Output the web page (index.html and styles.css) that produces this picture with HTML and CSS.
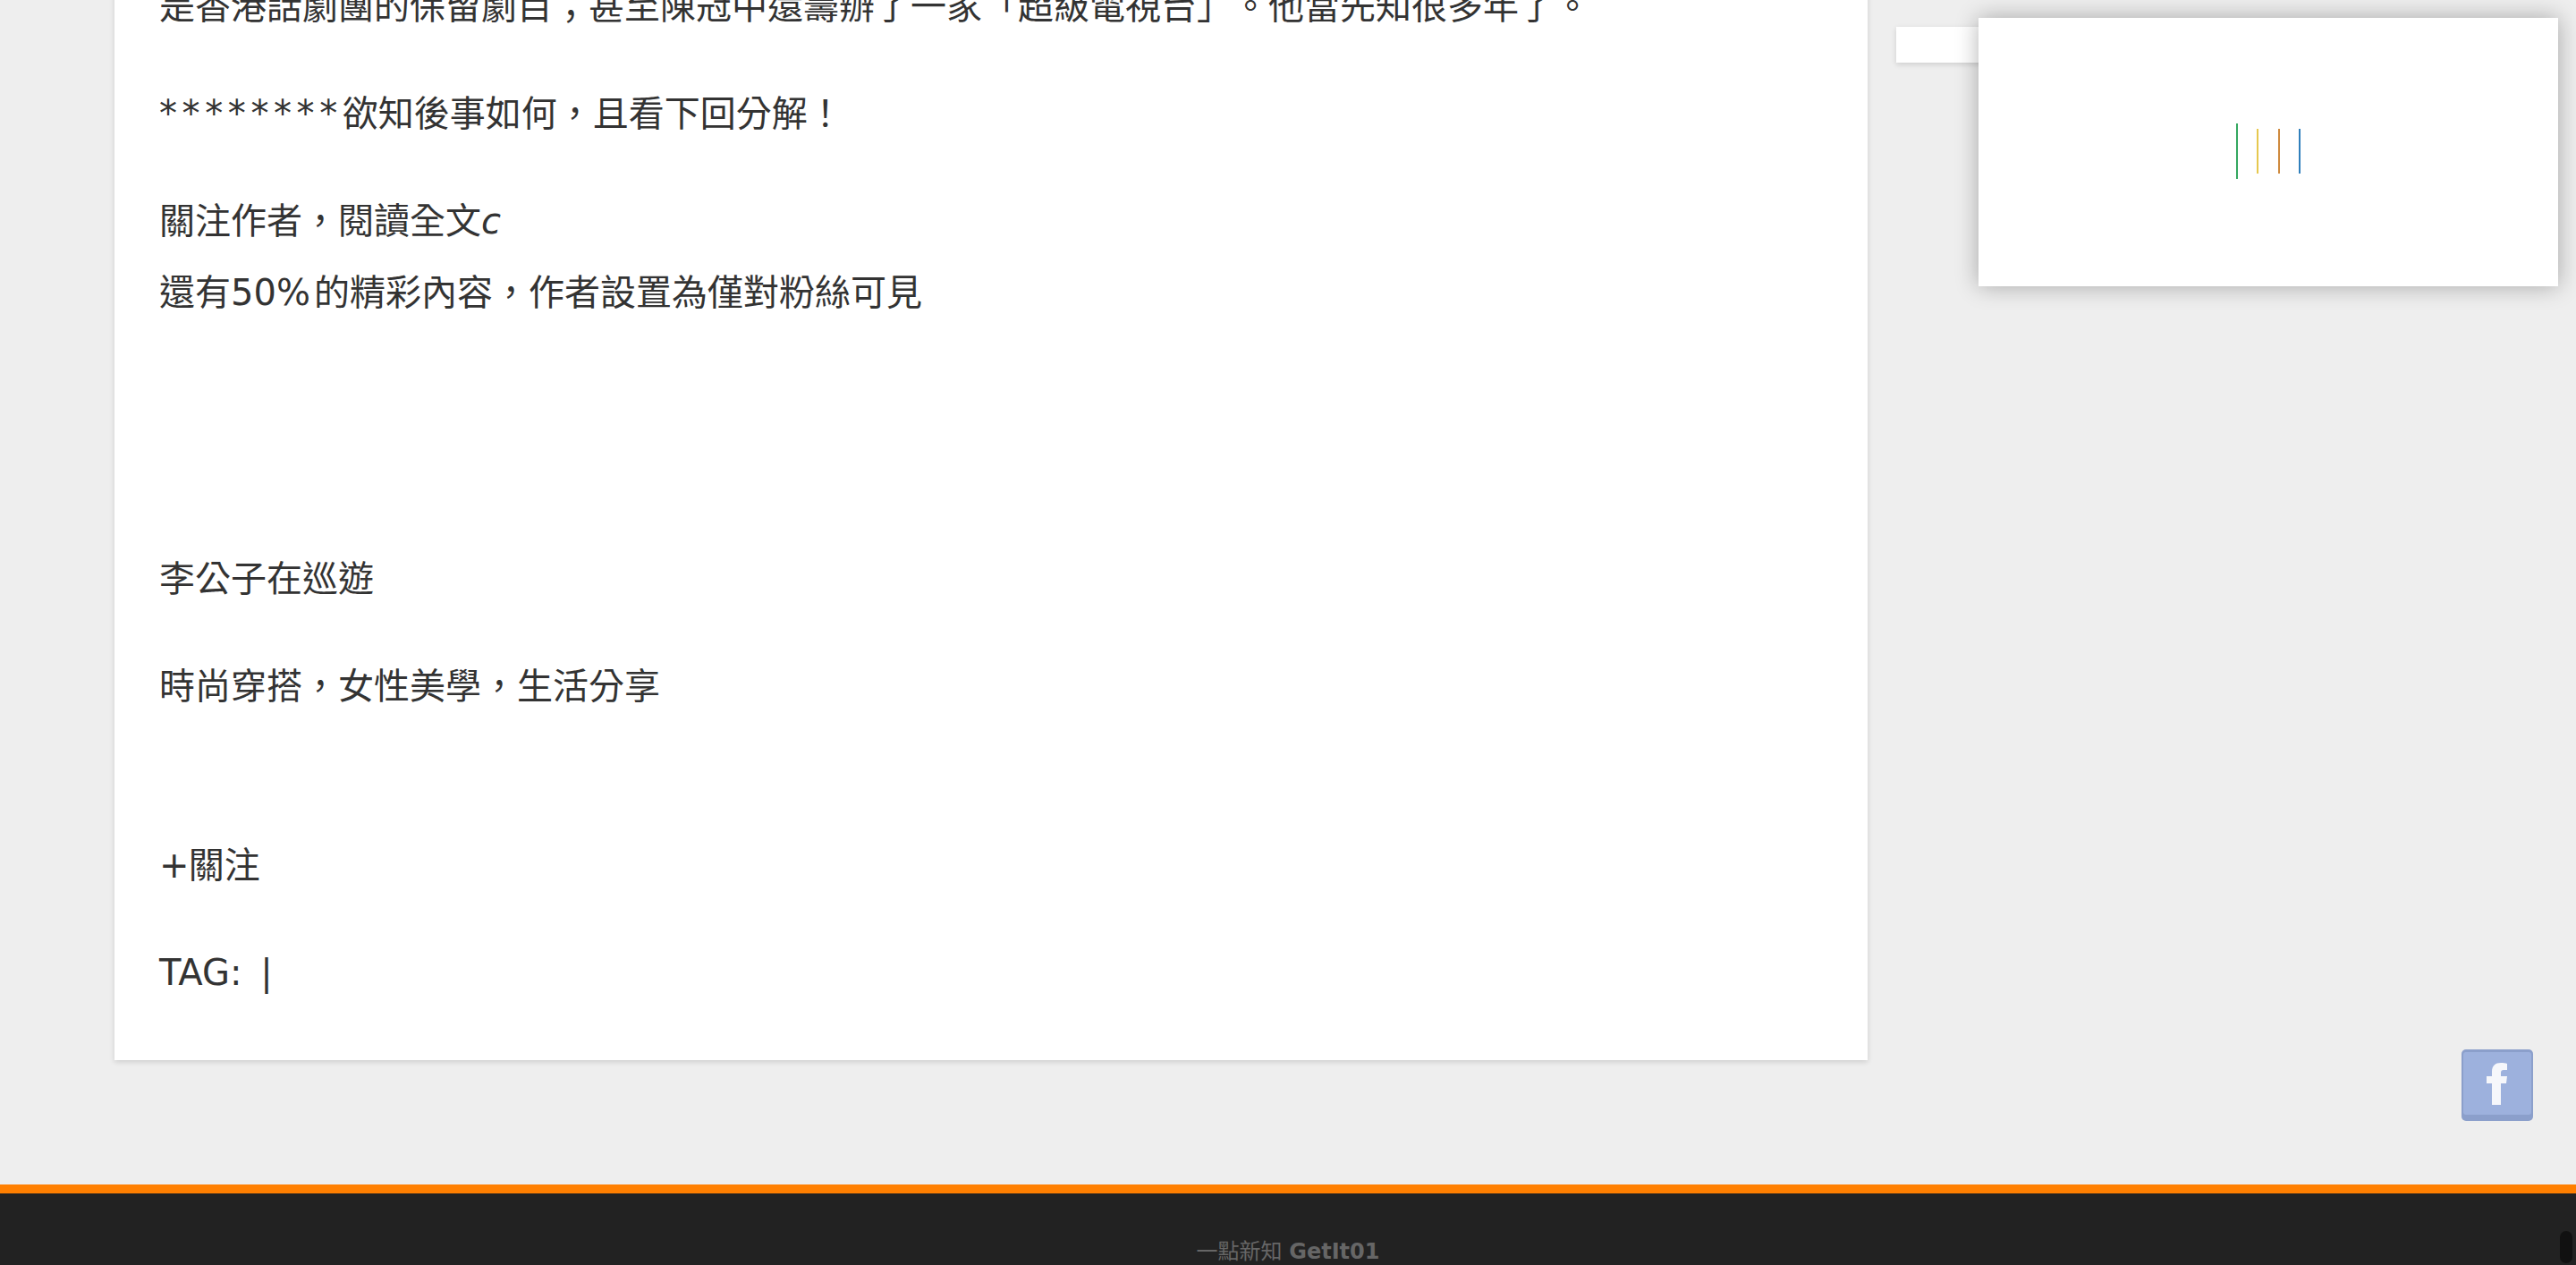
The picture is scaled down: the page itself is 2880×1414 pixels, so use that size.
FILE: index.html
```html
<!DOCTYPE html>
<html lang="zh-Hant">
<head>
  <meta charset="UTF-8">
  <title>一點新知 GetIt01</title>
  <link rel="stylesheet" href="styles.css">
</head>
<body>

  <div class="layout">
    <!-- Article -->
    <main class="article">
      <p>是香港話劇團的保留劇目；甚至陳冠中還籌辦了一家「超級電視台」。他當先知很多年了。</p>
      <p><span class="stars">********</span>欲知後事如何，且看下回分解！</p>
      <p class="tight">關注作者，閱讀全文<em>c</em></p>
      <p class="before-author">還有50<span class="wide">%</span>的精彩內容，作者設置為僅對粉絲可見</p>
      <p>李公子在巡遊</p>
      <p class="before-follow">時尚穿搭，女性美學，生活分享</p>
      <p><span class="plus">+</span>關注</p>
      <p class="last">TAG<span class="wide">: </span>|</p>
    </main>

    <!-- Sidebar -->
    <aside class="sidebar">
      <div class="widget"></div>
    </aside>
  </div>

  <footer class="footer">
    <div class="copyright">一點新知 <b>GetIt01</b></div>
    <div class="scroll-thumb"></div>
  </footer>

  <!-- Ad popup with loading bars -->
  <div class="popup">
    <div class="loader">
      <span class="bar bar-green"></span>
      <span class="bar bar-yellow"></span>
      <span class="bar bar-orange"></span>
      <span class="bar bar-blue"></span>
    </div>
  </div>

  <a class="fb-button" href="#" aria-label="Facebook">
    <svg width="80" height="80" viewBox="0 0 80 80">
      <rect x="0" y="0" width="80" height="80" rx="5" fill="#8b9fcb"/>
      <rect x="2" y="3" width="76" height="70" rx="3" fill="#9db1dd"/>
      <path d="M34 62V38h-6v-8h6v-5c0-7 4-10 10-10 3 0 5 0 7 1v7h-4c-2 0-3 1-3 3v4h7l-1 8h-6v24z" fill="#f6f7fb"/>
    </svg>
  </a>

</body>
</html>
```

FILE: styles.css
```css
* { margin: 0; padding: 0; box-sizing: border-box; }
html, body {
  height: 100%;
  overflow: hidden;
}
body {
  font-family: "DejaVu Sans", "Noto Sans CJK TC", sans-serif;
  background: #eeeeee;
  color: #333;
  display: flex;
  flex-direction: column;
  text-spacing-trim: space-all;
}
.layout {
  flex: 1;
  display: flex;
  gap: 32px;
  padding-left: 128px;
  min-height: 0;
}

/* page is scrolled, so the card starts above the window */
.article {
  width: 1960px;
  height: 1218px;
  margin-top: -33px;
  padding: 0 50px;
  background: #fff;
  box-shadow: 0 2px 6px rgba(0,0,0,0.14);
  font-size: 40px;
  line-height: 80px;
}
.article p {
  margin-bottom: 40px;
  white-space: nowrap;
}
.article p.tight { margin-bottom: 0; }
.article p.before-author { margin-bottom: 240px; }
.article p.before-follow { margin-bottom: 120px; }
.article p.last { margin-bottom: 0; }

.stars { letter-spacing: 0.14em; }
.wide { letter-spacing: 0.1em; }
.plus { letter-spacing: -0.02em; }

.sidebar {
  width: 632px;
  padding-top: 30px;
}
.widget {
  height: 40px;
  background: #fff;
  box-shadow: 0 2px 6px rgba(0,0,0,0.14);
}

.footer {
  position: relative;
  height: 90px;
  border-top: 10px solid #ff7f00;
  background: #222;
  color: #666;
  font-size: 24px;
  line-height: 32px;
  text-align: center;
  padding-top: 49px;
  overflow: hidden;
}
.scroll-thumb {
  position: absolute;
  top: 42px;
  right: 4px;
  width: 14px;
  height: 36px;
  border-radius: 7px;
  background: #111;
}

.popup {
  position: fixed;
  left: 2212px;
  top: 20px;
  width: 648px;
  height: 300px;
  background: #fff;
  box-shadow: 0 0 24px rgba(0,0,0,0.3);
  display: flex;
  align-items: center;
  justify-content: center;
}
.loader {
  display: flex;
  align-items: center;
  gap: 21px;
  height: 62px;
  margin-top: -2px;
}
.bar {
  width: 2px;
  height: 50px;
}
.bar-green { height: 62px; background: #34a760; }
.bar-yellow { background: #e6c84e; }
.bar-orange { background: #cf8a3e; margin-left: 1px; }
.bar-blue { background: #2f7fbc; }

.fb-button {
  position: fixed;
  left: 2752px;
  top: 1173px;
  width: 80px;
  height: 80px;
  display: block;
}
.fb-button svg { display: block; }
```
